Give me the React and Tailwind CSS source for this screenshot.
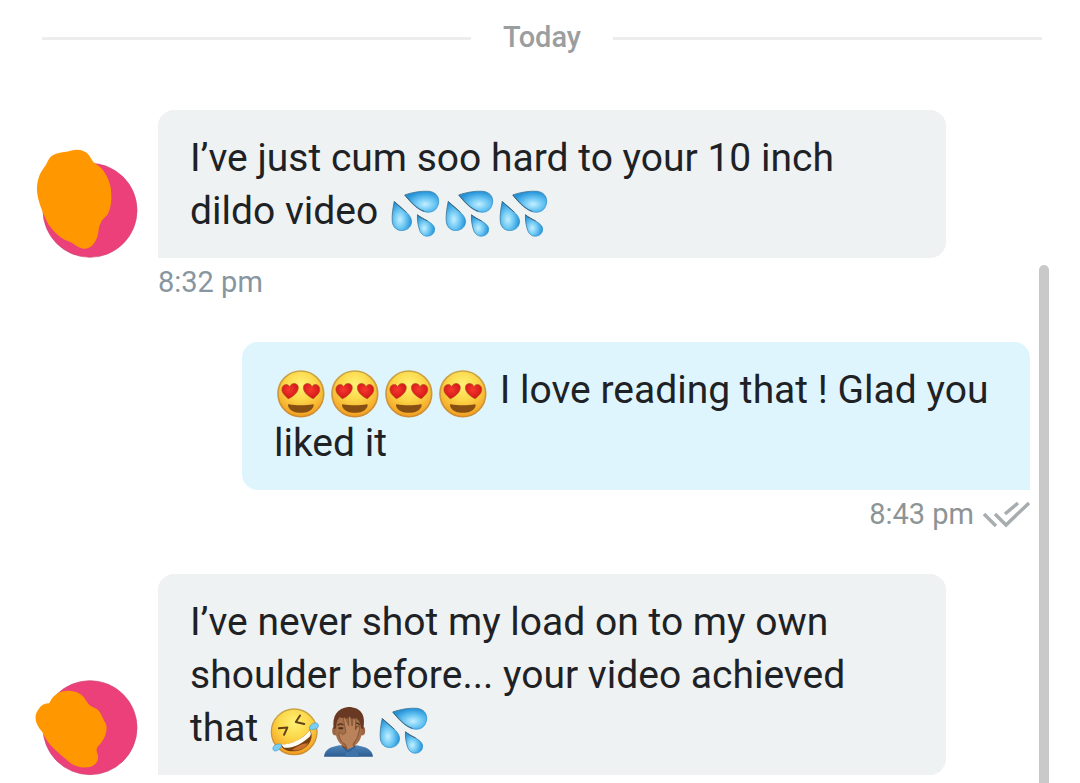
import React from 'react';
import clsx from 'clsx';

const EMOJI_CLASS = 'inline-block w-12 h-12 mx-[3px] -my-1 align-[-11px] overflow-visible';

function EmojiDefs() {
    return (
        <svg className="absolute w-0 h-0" aria-hidden="true">
            <defs>
                <radialGradient id="drop" cx="0.6" cy="0.62" r="0.6">
                    <stop offset="0" stopColor="#c3efff" />
                    <stop offset="0.45" stopColor="#70c9f5" />
                    <stop offset="1" stopColor="#2493d8" />
                </radialGradient>
                <radialGradient id="dropTall" cx="0.4" cy="0.62" r="0.6">
                    <stop offset="0" stopColor="#c3efff" />
                    <stop offset="0.45" stopColor="#75ccf5" />
                    <stop offset="1" stopColor="#2493d8" />
                </radialGradient>
                <linearGradient id="dropEdge" x1="0" y1="0" x2="1" y2="1">
                    <stop offset="0" stopColor="#3f6478" />
                    <stop offset="0.5" stopColor="#3b8bb8" />
                    <stop offset="1" stopColor="#2b9ade" />
                </linearGradient>
                <radialGradient id="face" cx="0.5" cy="0.3" r="0.72">
                    <stop offset="0" stopColor="#fff176" />
                    <stop offset="0.45" stopColor="#fcd84a" />
                    <stop offset="1" stopColor="#f39a1d" />
                </radialGradient>
                <linearGradient id="faceEdge" x1="0" y1="0" x2="0" y2="1">
                    <stop offset="0" stopColor="#c9a548" />
                    <stop offset="1" stopColor="#cf8c31" />
                </linearGradient>
                <radialGradient id="heart" cx="0.45" cy="0.4" r="0.6">
                    <stop offset="0" stopColor="#f5392d" />
                    <stop offset="1" stopColor="#d31418" />
                </radialGradient>
                <linearGradient id="shirt" x1="0" y1="0" x2="0" y2="1">
                    <stop offset="0" stopColor="#4f86bb" />
                    <stop offset="1" stopColor="#2d5c91" />
                </linearGradient>
            </defs>
        </svg>
    );
}

function Droplets() {
    return (
        <svg viewBox="-4 0 147 147" className={EMOJI_CLASS} role="img" aria-label="droplets">
            <g stroke="url(#dropEdge)" strokeWidth="2.5" strokeLinejoin="round">
                <path fill="url(#drop)" d="M38 12C62 4 90 -1 112 1C132 3 143 16 142 34C140 53 128 65 110 65C84 65 58 38 38 12Z" />
                <path fill="url(#dropTall)" d="M6 32C2 52 -2 74 0 94C2 111 14 122 31 121C48 120 60 107 59 91C57 72 28 52 6 32Z" />
                <path fill="url(#dropTall)" d="M77 73C76 89 79 107 84 121C89 134 99 140 111 138C124 136 132 125 129 112C124 97 97 88 77 73Z" />
            </g>
            <path d="M40 14C57 34 76 55 97 62M7 33C16 43 30 54 42 64M78 74C86 81 97 87 107 91" fill="none" stroke="#456577" strokeWidth="3" strokeLinecap="round" />
        </svg>
    );
}

function HeartEyes() {
    return (
        <svg viewBox="0 0 147 147" className={EMOJI_CLASS} role="img" aria-label="heart eyes">
            <circle cx="73" cy="73" r="70" fill="url(#face)" stroke="url(#faceEdge)" strokeWidth="5" />
            <g fill="url(#heart)" stroke="#a8521c" strokeWidth="2">
                <path d="M35 88C24 79 14 69 15 58C16 44 32 40 39 51C44 38 62 38 65 51C67 66 53 79 35 88Z" />
                <path d="M111 88C122 79 132 69 131 58C130 44 114 40 107 51C102 38 84 38 81 51C79 66 93 79 111 88Z" />
            </g>
            <path d="M36 105C58 109 88 109 110 105C113 105 113 109 111 113C104 126 90 131 73 131C56 131 42 126 35 113C33 108 33 105 36 105Z" fill="#875012" />
        </svg>
    );
}

function Rofl() {
    return (
        <svg viewBox="0 0 147 147" className={EMOJI_CLASS} role="img" aria-label="rolling on the floor laughing">
            <circle cx="71" cy="73" r="70" fill="url(#face)" stroke="url(#faceEdge)" strokeWidth="4" />
            <g fill="none" stroke="#644016" strokeWidth="6" strokeLinecap="round" strokeLinejoin="round">
                <path d="M89 23L76 43L102 49" />
                <path d="M24 62L50 60L40 82" />
            </g>
            <path d="M29 113C66 111 97 95 119 67C132 86 121 114 96 126C70 138 39 134 29 113Z" fill="#79400f" />
            <path d="M31 112C66 111 97 95 118 69C124 77 122 83 119 87C95 110 68 123 40 122Z" fill="#fffdf2" />
            <path d="M64 129C74 119 98 108 114 108C106 124 82 134 64 129Z" fill="#c9702c" />
            <path d="M118 59C123 45 143 41 145 52C147 64 132 67 118 66Z" fill="#7bcdf3" stroke="#419cca" strokeWidth="2" />
            <path d="M31 111C20 107 3 116 6 126C10 138 27 129 33 116Z" fill="#7bcdf3" stroke="#419cca" strokeWidth="2" />
        </svg>
    );
}

function Facepalm() {
    return (
        <svg viewBox="0 0 147 147" className={EMOJI_CLASS} role="img" aria-label="man facepalming">
            <path d="M-3 149C-1 126 17 119 44 114H97C125 119 144 126 147 149Z" fill="url(#shirt)" />
            <path d="M52 100H92V117C84 133 62 133 52 117Z" fill="#855331" />
            <ellipse cx="31" cy="70" rx="9" ry="14" fill="#9b6643" />
            <ellipse cx="114" cy="70" rx="9" ry="14" fill="#9b6643" />
            <path d="M32 45C33 13 111 13 113 45V73C112 103 91 121 73 121C53 121 34 103 32 73Z" fill="#a56f49" />
            <path d="M27 65C20 24 39 0 71 -3C112 -3 126 24 117 65L110 62C110 48 105 38 97 32C75 34 52 31 45 28C35 38 35 50 34 62Z" fill="#6a3923" />
            <g fill="none" stroke="#4e2e1c" strokeWidth="4" strokeLinecap="round">
                <path d="M40 52Q47 46 55 51M92 48Q100 44 106 51" />
                <path d="M44 62H53M95 60H103" strokeWidth="6" />
            </g>
            <path d="M56 31Q60 26 64 34L73 54L72 30Q74 23 79 30L83 55L86 34Q90 28 94 37L93 67L100 55Q108 55 106 64L99 91L86 111L92 128L72 136L62 111C51 107 43 92 42 77Q48 73 54 82L64 75Z" fill="#b9825a" stroke="#7e4f30" strokeWidth="2.5" />
            <path d="M64 128L92 118L106 149H62Z" fill="#3d73a8" />
            <path d="M56 120L70 134L92 118" fill="none" stroke="#284f80" strokeWidth="3" />
        </svg>
    );
}

const EMOJI = {
    '💦': Droplets,
    '😍': HeartEyes,
    '🤣': Rofl,
    '🤦': Facepalm,
};

const AVATARS = {
    tall: {
        cy: 211,
        viewBox: '48 24 306 330',
        blob: 'M100 45C118 34 136 38 152 32C175 26 196 31 207 46C217 60 218 68 232 75C252 88 266 113 272 142C275 170 276 195 265 219C257 234 247 235 243 247C232 266 239 285 225 305C216 323 196 330 182 324C167 319 162 310 145 304C115 292 87 263 74 230C64 206 53 180 51 153C50 119 60 98 75 79C84 66 85 53 100 45Z',
    },
    wide: {
        cy: 188,
        viewBox: '48 0 306 330',
        blob: 'M88 115C97 94 112 81 135 78C166 75 187 86 199 108C209 125 216 124 231 133C244 142 247 160 256 173C265 190 257 215 245 231C237 243 225 248 232 265C239 284 228 301 210 306C182 311 158 303 138 283C117 265 88 241 77 220C70 209 70 202 61 194C46 175 40 153 56 132C64 120 75 115 88 115Z',
    },
};

function Avatar({ shape }) {
    const { cy, viewBox, blob } = AVATARS[shape];

    return (
        <svg viewBox={viewBox} className="w-[102px] h-[110px] shrink-0 overflow-visible" aria-hidden="true">
            <circle cx="210" cy={cy} r="141" fill="#ec407a" stroke="#cf4275" strokeWidth="2" />
            <path d={blob} fill="#ff9800" />
        </svg>
    );
}

function MessageText({ text }) {
    return Array.from(text).map((char, i) => {
        const Icon = EMOJI[char];
        return Icon ? <Icon key={i} /> : char;
    });
}

function ReadTicks() {
    return (
        <svg viewBox="0 0 48 28" className="w-[48px] h-[28px]" fill="none" stroke="#a8aeb0" strokeWidth="3.5" role="img" aria-label="Read">
            <path d="M2 14L14 26M13 14L24 25L47 3M23 14L36 3" />
        </svg>
    );
}

const messages = [
    { id: 1, text: 'I’ve just cum soo hard to your 10 inch dildo video 💦💦💦', time: '8:32 pm', avatar: 'tall' },
    { id: 2, text: '😍😍😍😍 I love reading that ! Glad you liked it', time: '8:43 pm', mine: true },
    { id: 3, text: 'I’ve never shot my load on to my own shoulder before... your video achieved that 🤣🤦💦', avatar: 'wide' },
];

function Message({ text, time, avatar, mine }) {
    return (
        <li className={clsx('flex flex-col', mine ? 'pl-[206px]' : 'pr-[84px]')}>
            <div className="flex items-end gap-5">
                {avatar && <Avatar shape={avatar} />}
                <p
                    className={clsx(
                        'flex-1 min-w-0 px-8 pt-[22px] pb-5 text-[39px] leading-[53px] text-[#1f2225] rounded-t-2xl',
                        mine ? 'bg-[#dff5fd] rounded-bl-2xl' : 'bg-[#eef2f3] rounded-br-2xl'
                    )}
                >
                    <MessageText text={text} />
                </p>
            </div>
            {time && (
                <div className={clsx('flex items-center gap-2 h-12 text-[29px] leading-8', mine ? 'justify-end text-[#8d9496]' : 'pl-[122px] text-[#8796a0]')}>
                    <time>{time}</time>
                    {mine && <ReadTicks />}
                </div>
            )}
        </li>
    );
}

export default function App() {
    return (
        <main className="relative h-screen overflow-hidden bg-white font-['Roboto',sans-serif]">
            <EmojiDefs />
            <div className="flex items-center gap-8 h-[74px] pl-[42px] pr-[38px] pt-[2px]">
                <div className="flex-1 h-[3px] bg-[#ededed]" />
                <h2 className="text-[29px] leading-8 font-medium text-[#9b9e9f] pb-[2px]">Today</h2>
                <div className="flex-1 h-[3px] bg-[#ededed]" />
            </div>
            <ul className="flex flex-col gap-9 pt-9 pl-9 pr-[50px]">
                {messages.map((message) => (
                    <Message key={message.id} {...message} />
                ))}
            </ul>
            <div className="absolute top-[265px] bottom-0 right-[31px] w-[10px] rounded-t-full bg-[#c9c9c9]" />
        </main>
    );
}
